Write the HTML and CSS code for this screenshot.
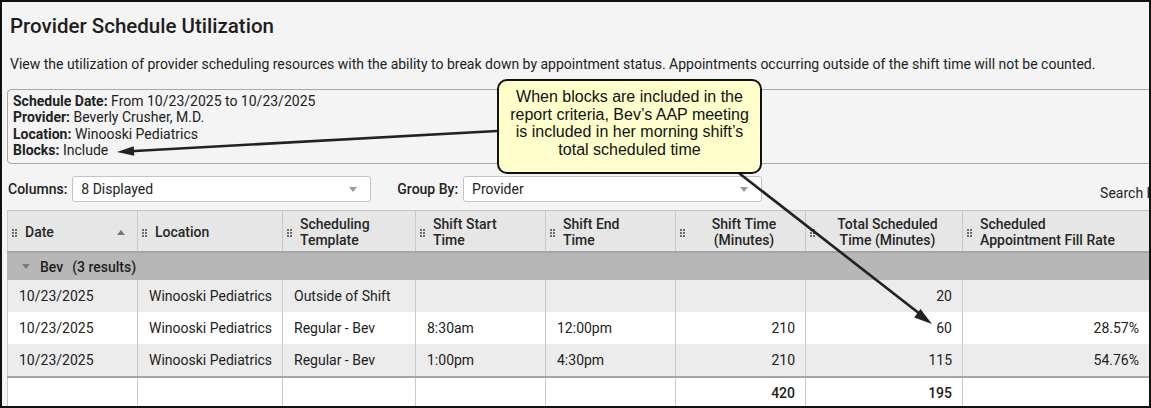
FILE: index.html
```html
<!DOCTYPE html>
<html>
<head>
<meta charset="utf-8">
<link rel="stylesheet" href="styles.css">
</head>
<body>
<div class="frame">
  <h1 class="title">Provider Schedule Utilization</h1>
  <p class="desc">View the utilization of provider scheduling resources with the ability to break down by appointment status. Appointments occurring outside of the shift time will not be counted.</p>
  <div class="criteria">
    <div><b>Schedule Date:</b> From 10/23/2025 to 10/23/2025</div>
    <div><b>Provider:</b> Beverly Crusher, M.D.</div>
    <div><b>Location:</b> Winooski Pediatrics</div>
    <div><b>Blocks:</b> Include</div>
  </div>
  <div class="toolbar">
    <span class="lbl">Columns:</span>
    <div class="select"><span>8 Displayed</span><i class="caret"></i></div>
    <span class="lbl lbl-group">Group By:</span>
    <div class="select"><span>Provider</span><i class="caret"></i></div>
    <div class="search"><span>Search Results:</span><span class="search-input"></span></div>
  </div>
  <div class="grid">
    <div class="row head">
      <div class="th"><svg class="grip" width="5" height="8" viewBox="0 0 5 8"><circle cx="1" cy="1" r="1"/><circle cx="4" cy="1" r="1"/><circle cx="1" cy="4" r="1"/><circle cx="4" cy="4" r="1"/><circle cx="1" cy="7" r="1"/><circle cx="4" cy="7" r="1"/></svg><span class="tt">Date</span><i class="sort"></i></div>
      <div class="th"><svg class="grip" width="5" height="8" viewBox="0 0 5 8"><circle cx="1" cy="1" r="1"/><circle cx="4" cy="1" r="1"/><circle cx="1" cy="4" r="1"/><circle cx="4" cy="4" r="1"/><circle cx="1" cy="7" r="1"/><circle cx="4" cy="7" r="1"/></svg><span class="tt">Location</span></div>
      <div class="th"><svg class="grip" width="5" height="8" viewBox="0 0 5 8"><circle cx="1" cy="1" r="1"/><circle cx="4" cy="1" r="1"/><circle cx="1" cy="4" r="1"/><circle cx="4" cy="4" r="1"/><circle cx="1" cy="7" r="1"/><circle cx="4" cy="7" r="1"/></svg><span class="tt">Scheduling<br>Template</span></div>
      <div class="th"><svg class="grip" width="5" height="8" viewBox="0 0 5 8"><circle cx="1" cy="1" r="1"/><circle cx="4" cy="1" r="1"/><circle cx="1" cy="4" r="1"/><circle cx="4" cy="4" r="1"/><circle cx="1" cy="7" r="1"/><circle cx="4" cy="7" r="1"/></svg><span class="tt">Shift Start<br>Time</span></div>
      <div class="th"><svg class="grip" width="5" height="8" viewBox="0 0 5 8"><circle cx="1" cy="1" r="1"/><circle cx="4" cy="1" r="1"/><circle cx="1" cy="4" r="1"/><circle cx="4" cy="4" r="1"/><circle cx="1" cy="7" r="1"/><circle cx="4" cy="7" r="1"/></svg><span class="tt">Shift End<br>Time</span></div>
      <div class="th"><svg class="grip" width="5" height="8" viewBox="0 0 5 8"><circle cx="1" cy="1" r="1"/><circle cx="4" cy="1" r="1"/><circle cx="1" cy="4" r="1"/><circle cx="4" cy="4" r="1"/><circle cx="1" cy="7" r="1"/><circle cx="4" cy="7" r="1"/></svg><span class="tt center">Shift Time<br>(Minutes)</span></div>
      <div class="th"><svg class="grip" width="5" height="8" viewBox="0 0 5 8"><circle cx="1" cy="1" r="1"/><circle cx="4" cy="1" r="1"/><circle cx="1" cy="4" r="1"/><circle cx="4" cy="4" r="1"/><circle cx="1" cy="7" r="1"/><circle cx="4" cy="7" r="1"/></svg><span class="tt center">Total Scheduled<br>Time (Minutes)</span></div>
      <div class="th"><svg class="grip" width="5" height="8" viewBox="0 0 5 8"><circle cx="1" cy="1" r="1"/><circle cx="4" cy="1" r="1"/><circle cx="1" cy="4" r="1"/><circle cx="4" cy="4" r="1"/><circle cx="1" cy="7" r="1"/><circle cx="4" cy="7" r="1"/></svg><span class="tt">Scheduled<br>Appointment Fill Rate</span></div>
    </div>
    <div class="group"><i class="down"></i><b>Bev</b><span>(3 results)</span></div>
    <div class="row data alt">
      <div class="td">10/23/2025</div><div class="td">Winooski Pediatrics</div><div class="td">Outside of Shift</div><div class="td"></div><div class="td"></div><div class="td num"></div><div class="td num">20</div><div class="td num"></div>
    </div>
    <div class="row data">
      <div class="td">10/23/2025</div><div class="td">Winooski Pediatrics</div><div class="td">Regular - Bev</div><div class="td">8:30am</div><div class="td">12:00pm</div><div class="td num">210</div><div class="td num">60</div><div class="td num">28.57%</div>
    </div>
    <div class="row data alt">
      <div class="td">10/23/2025</div><div class="td">Winooski Pediatrics</div><div class="td">Regular - Bev</div><div class="td">1:00pm</div><div class="td">4:30pm</div><div class="td num">210</div><div class="td num">115</div><div class="td num">54.76%</div>
    </div>
    <div class="row foot">
      <div class="td"></div><div class="td"></div><div class="td"></div><div class="td"></div><div class="td"></div><div class="td num">420</div><div class="td num">195</div><div class="td num"></div>
    </div>
  </div>

  <svg class="arrows" width="1151" height="408" viewBox="0 0 1151 408" xmlns="http://www.w3.org/2000/svg">
    <line x1="497" y1="131" x2="130" y2="151.2" stroke="#222" stroke-width="2.6"/>
    <polygon points="117,152 134.2,155.7 133.7,146.2" fill="#222"/>
    <line x1="735" y1="170" x2="920" y2="314" stroke="#222" stroke-width="2.6"/>
    <polygon points="932,324 914.2,317.4 920.5,308.9" fill="#222"/>
  </svg>
  <div class="callout">When blocks are included in the report criteria, Bev’s AAP meeting is included in her morning shift’s total scheduled time</div>
</div>
</body>
</html>
```

FILE: styles.css
```css
html, body {
  margin: 0;
  padding: 0;
  background: #f4f4f4;
}
.frame {
  position: relative;
  width: 1151px;
  height: 408px;
  box-sizing: border-box;
  border: 2px solid #111;
  overflow: hidden;
  background: #f4f4f4;
  padding-left: 5px;
  font-family: Roboto, "Liberation Sans", Arial, sans-serif;
  font-size: 14px;
  color: #222;
}
.title {
  margin: 0;
  padding: 12px 0 0 3px;
  font-size: 20.5px;
  line-height: 24px;
  font-weight: 500;
  color: #1e1e1e;
}
.desc {
  margin: 16px 0 0 0;
  padding-left: 3px;
  line-height: 20px;
  white-space: nowrap;
}
.criteria {
  margin-top: 15px;
  width: 1160px;
  box-sizing: border-box;
  border: 1px solid #a8a8a8;
  border-radius: 4px;
  padding: 3px 5px 5px 5px;
  line-height: 16.3px;
}
.criteria b {
  font-weight: 700;
}
.toolbar {
  display: flex;
  align-items: center;
  margin-top: 12px;
  height: 26px;
  white-space: nowrap;
}
.lbl {
  flex: none;
  font-weight: 500;
  padding-left: 1px;
  margin-right: 5px;
}
.lbl-group {
  margin-left: 25px;
  margin-right: 5px;
}
.select {
  flex: none;
  width: 299px;
  height: 26px;
  box-sizing: border-box;
  background: #fff;
  border: 1px solid #c4c4c4;
  border-radius: 3px;
  display: flex;
  align-items: center;
  justify-content: space-between;
  padding: 0 13px 0 8px;
}
.caret {
  width: 0;
  height: 0;
  border-left: 4px solid transparent;
  border-right: 4px solid transparent;
  border-top: 5px solid #9a9a9a;
}
.search {
  flex: none;
  display: flex;
  align-items: center;
  margin-left: 338px;
  margin-top: 8px;
  gap: 6px;
}
.search-input {
  display: inline-block;
  width: 150px;
  height: 24px;
  background: #fff;
  border: 1px solid #c4c4c4;
}
.grid {
  margin-top: 8px;
  width: 1300px;
}
.row {
  display: grid;
  grid-template-columns: 131px 145px 133px 130px 130px 130px 157px 187px;
}
.head {
  height: 43px;
  box-sizing: border-box;
  background: #e6e6e6;
  border-top: 1px solid #c4c4c4;
  border-bottom: 2px solid #a6a6a6;
}
.th, .td {
  box-sizing: border-box;
  border-right: 1px solid #c9c9c9;
}
.row > :first-child {
  border-left: 1px solid #c9c9c9;
}
.th {
  display: flex;
  align-items: center;
  padding: 2px 10px 0 4px;
  font-weight: 500;
  line-height: 16.5px;
  color: #262626;
}
.tt {
  margin-left: 8px;
}
.tt.center {
  flex: 1;
  text-align: center;
}
.grip {
  flex: none;
  fill: #444;
  margin-top: 2px;
}
.sort {
  margin-left: auto;
  margin-right: 2px;
  width: 0;
  height: 0;
  border-left: 4px solid transparent;
  border-right: 4px solid transparent;
  border-bottom: 5px solid #777;
}
.group {
  height: 27px;
  background: #b7b7b7;
  display: flex;
  align-items: center;
  padding-left: 15px;
  font-weight: 500;
  color: #1e1e1e;
}
.group b {
  font-weight: 500;
  margin-left: 10px;
}
.group span {
  margin-left: 9px;
}
.down {
  width: 0;
  height: 0;
  border-left: 4.5px solid transparent;
  border-right: 4.5px solid transparent;
  border-top: 5px solid #7a7a7a;
}
.data {
  height: 32px;
  background: #fff;
}
.data.alt {
  background: #ececec;
}
.td {
  display: flex;
  align-items: center;
  padding: 0 10px 0 11px;
  white-space: nowrap;
}
.td.num {
  justify-content: flex-end;
}
.foot {
  height: 30px;
  background: #fff;
  border-top: 2px solid #a6a6a6;
  font-weight: 500;
}
.arrows {
  position: absolute;
  left: -2px;
  top: -2px;
}
.callout {
  position: absolute;
  left: 495px;
  top: 77px;
  width: 265px;
  height: 95px;
  box-sizing: border-box;
  background: #ffffcc;
  border: 2.5px solid #111;
  border-radius: 10px;
  padding: 7px 7px 0 7px;
  font-family: "Liberation Sans", Arial, sans-serif;
  font-size: 16px;
  line-height: 17.5px;
  text-align: center;
  color: #111;
}
```
